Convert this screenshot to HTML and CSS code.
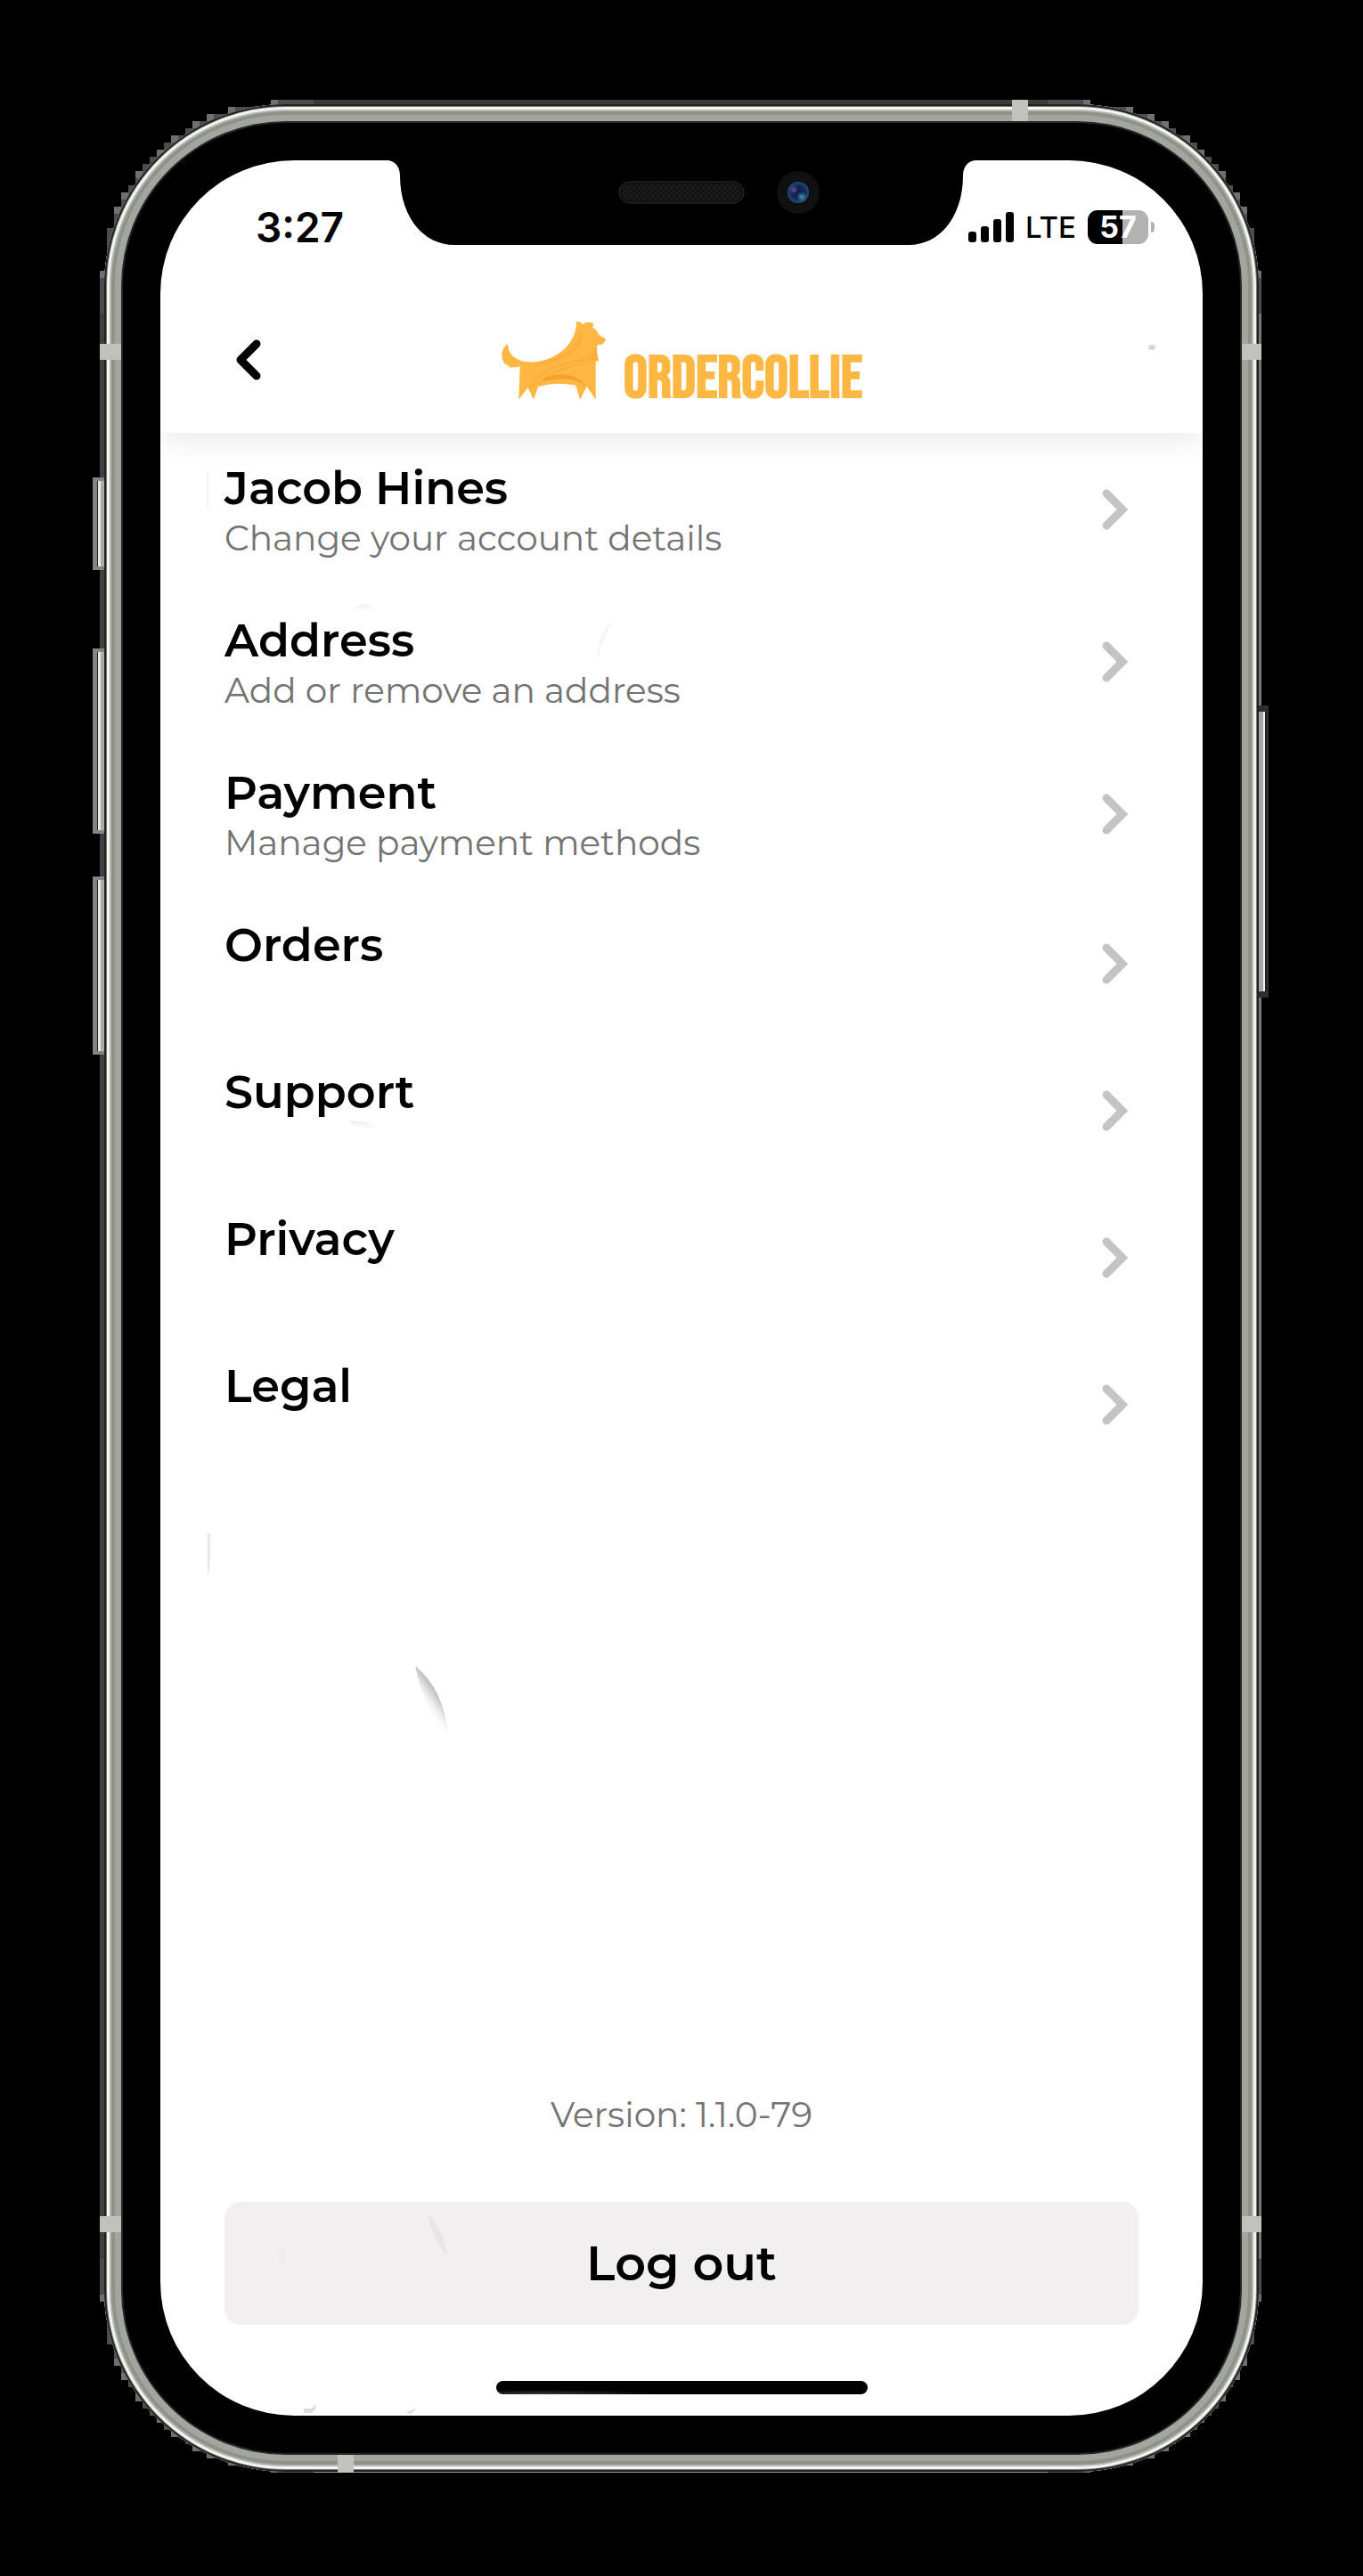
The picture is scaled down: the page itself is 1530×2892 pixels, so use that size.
FILE: index.html
```html
<!DOCTYPE html>
<html lang="en">
<head>
<meta charset="utf-8">
<meta name="viewport" content="width=device-width, initial-scale=1">
<title>OrderCollie – Account</title>
<link rel="stylesheet" href="styles.css">
</head>
<body>
<svg class="defs" aria-hidden="true">
  <symbol id="chevron" viewBox="0 0 30 48"><path d="M6 6 24 24 6 42" fill="none" stroke="currentColor" stroke-width="9" stroke-linecap="round" stroke-linejoin="miter"/></symbol>
  <symbol id="edge" viewBox="0 0 30 30"><path d="M24 0H30V30H0V24H1V18H2V15H3V13H4V12H5V10H6V9H7V8H8V7H9V6H10V5H12V4H13V3H15V2H18V1H24Z" fill="#4c4c4c"/><path d="M24 0h1v1h-1zM18 1h1v1h-1zM15 2h1v1h-1zM13 3h1v1h-1zM10 5h1v1h-1zM8 7h1v1H8zM5 10h1v1H5zM3 13h1v1H3zM2 15h1v1H2zM0 24h1v1H0z" fill="#707070"/></symbol>
</svg>
<div class="phone">
  <svg class="edge edge-tl" aria-hidden="true"><use href="#edge"/></svg>
  <svg class="edge edge-tr" aria-hidden="true"><use href="#edge"/></svg>
  <svg class="edge edge-bl" aria-hidden="true"><use href="#edge"/></svg>
  <svg class="edge edge-br" aria-hidden="true"><use href="#edge"/></svg>
  <i class="key key-mute"></i><i class="key key-up"></i><i class="key key-down"></i><i class="key key-power"></i>
  <div class="frame">
    <i class="band band-top"></i><i class="band band-bottom"></i>
    <i class="band band-side band-l1"></i><i class="band band-side band-l2"></i>
    <i class="band band-side band-r1"></i><i class="band band-side band-r2"></i>
    <main class="screen">
      <svg class="notch" viewBox="0 0 662 95" aria-hidden="true">
        <defs>
          <pattern id="mesh" width="6" height="6" patternUnits="userSpaceOnUse"><path d="M0 0h3v3H0zM3 3h3v3H3z" fill="#1c1c1c"/></pattern>
          <radialGradient id="lens"><stop offset="0" stop-color="#101a44"/><stop offset=".6" stop-color="#14264f"/><stop offset="1" stop-color="#1f4d7c"/></radialGradient>
          <radialGradient id="violet"><stop offset="0" stop-color="#6e4ba6"/><stop offset="1" stop-color="#6e4ba6" stop-opacity="0"/></radialGradient>
          <radialGradient id="cyan"><stop offset="0" stop-color="#4790b4"/><stop offset="1" stop-color="#4790b4" stop-opacity="0"/></radialGradient>
        </defs>
        <path d="M0 0C9 0 15 7 15 17C15 62 40 95 76 95H586C622 95 647 62 647 17C647 7 653 0 662 0Z"/>
        <rect x="261" y="24" width="140" height="24" rx="12" fill="#111" stroke="#2c2c2c"/>
        <rect x="264" y="27" width="134" height="18" rx="9" fill="url(#mesh)"/>
        <circle cx="462" cy="36" r="24" fill="#101010"/>
        <circle cx="462" cy="36" r="12" fill="url(#lens)"/>
        <circle cx="457" cy="33" r="5" fill="url(#violet)"/>
        <circle cx="466" cy="41" r="6" fill="url(#cyan)"/>
      </svg>
      <svg class="glints" viewBox="0 0 1170 2532" aria-hidden="true">
        <defs>
          <linearGradient id="glint" gradientUnits="userSpaceOnUse" x1="313" y1="1719" x2="293" y2="1733"><stop offset="0" stop-color="#b0b0b0"/><stop offset=".4" stop-color="#ddd"/><stop offset="1" stop-color="#fff" stop-opacity="0"/></linearGradient>
          <linearGradient id="glint-side"><stop offset="0" stop-color="#ddd"/><stop offset="1" stop-color="#fff" stop-opacity="0"/></linearGradient>
          <linearGradient id="glint-down" x2="0" y2="1"><stop offset="0" stop-color="#ebebeb"/><stop offset="1" stop-color="#fff" stop-opacity="0"/></linearGradient>
        </defs>
        <path d="M286 1690Q319 1718 323 1768Q296 1742 286 1690Z" fill="url(#glint)"/>
        <path d="M53 1541h7l-6 45h-1z" fill="url(#glint-side)"/>
        <path d="M52 350h5v42h-5z" fill="url(#glint-side)" opacity=".5"/>
        <path d="M212 508q8-10 16-10t16 10z" fill="url(#glint-down)"/>
        <path d="M212 1078l20 2 10 5-8 6-10-3z" fill="url(#glint-down)"/>
        <path d="M508 518q-18 12-17 44 3-22 17-44z" fill="#f5f5f5"/>
        <ellipse cx="1113" cy="210" rx="4" ry="3" fill="#d8d8d8"/>
        <path d="M300 2306q18 16 22 46-14-14-22-46z" fill="#e7e6e4"/>
        <path d="M132 2344h8v20h-6z" fill="#eeedea"/>
        <path d="M161 2524h8l6-5-1 6-4 4h-9z" fill="#ddd"/>
        <path d="M274 2527q11 2 14-8l-3 8-5 3z" fill="#ddd"/>
      </svg>

      <div class="status">
        <span class="time">3:27</span>
        <div class="status-right">
          <svg class="signal" viewBox="0 0 51 34" aria-label="Signal"><rect y="22" width="9" height="12" rx="3"/><rect x="14" y="16" width="9" height="18" rx="3"/><rect x="28" y="8" width="9" height="26" rx="3"/><rect x="42" width="9" height="34" rx="3"/></svg>
          <span class="network">LTE</span>
          <span class="battery"><span class="level">57</span><i class="nub"></i></span>
        </div>
      </div>

      <header class="topbar">
        <button class="back" type="button" aria-label="Back"><svg viewBox="0 0 30 48"><path d="M24 6 6 24 24 42" fill="none" stroke="currentColor" stroke-width="9" stroke-linecap="round" stroke-linejoin="round"/></svg></button>
        <div class="brand">
          <svg class="dog" viewBox="66 60 356 268" aria-hidden="true">
            <defs>
              <linearGradient id="fold" x1="0" y1="0" x2=".5" y2="1"><stop offset="0" stop-color="#f39a25"/><stop offset="1" stop-color="#ffb743"/></linearGradient>
            </defs>
            <path d="M89 139C90 170 111 198 165 200C235 201 322 150 321 62Q335 64 345 73Q347 66 358 66Q371 64 379 71Q380 78 374 82Q388 88 395 105Q405 115 420 121Q417 143 391 143L390 168L396 196L386 197V327L356 282L333 327L319 279Q255 265 192 283L176 327L157 286L126 327L130 214Q111 219 96 218Q91 211 80 207Q68 193 69 172Q72 148 89 139Z" fill="#ffb743"/>
            <path d="M131 260C160 205 230 195 270 179C315 158 334 125 334 97C350 142 300 177 255 195C200 207 160 220 131 260Z" fill="url(#fold)"/>
            <path d="M158 286C190 235 235 215 290 201C340 188 365 183 389 154L390 168L395 195C340 197 290 205 240 223C205 240 190 262 176 285L164 300Z" fill="url(#fold)" opacity=".55"/>
            <path d="M191 283Q226 217 386 198Q300 210 232 242Q210 254 191 283Z" fill="#f39a25" opacity=".8"/>
            <path d="M218 249Q310 224 355 283Q302 239 203 268Z" fill="#f39a25" opacity=".75"/>
          </svg>
          <span class="wordmark">ORDERCOLLIE</span>
        </div>
      </header>

      <nav class="menu" aria-label="Account">
        <a class="item item-double" href="#account"><span class="copy"><strong>Jacob Hines</strong><small>Change your account details</small></span><svg class="go"><use href="#chevron"/></svg></a>
        <a class="item item-double" href="#address"><span class="copy"><strong>Address</strong><small>Add or remove an address</small></span><svg class="go"><use href="#chevron"/></svg></a>
        <a class="item item-double" href="#payment"><span class="copy"><strong>Payment</strong><small>Manage payment methods</small></span><svg class="go"><use href="#chevron"/></svg></a>
        <a class="item" href="#orders"><span class="copy"><strong>Orders</strong></span><svg class="go"><use href="#chevron"/></svg></a>
        <a class="item" href="#support"><span class="copy"><strong>Support</strong></span><svg class="go"><use href="#chevron"/></svg></a>
        <a class="item" href="#privacy"><span class="copy"><strong>Privacy</strong></span><svg class="go"><use href="#chevron"/></svg></a>
        <a class="item" href="#legal"><span class="copy"><strong>Legal</strong></span><svg class="go"><use href="#chevron"/></svg></a>
      </nav>

      <footer class="foot">
        <p class="version">Version: 1.1.0-79</p>
        <button class="logout" type="button">Log out</button>
        <i class="home"></i>
      </footer>
    </main>
  </div>
</div>
</body>
</html>
```
FILE: styles.css
```css
* { box-sizing: border-box; }

body {
  margin: 0;
  padding: 117px;
  background: #000;
  color: #000;
  font-family: Montserrat, Inter, "Open Sans", sans-serif;
}

.defs { position: absolute; width: 0; height: 0; }

/* Device shell */
.phone { position: relative; }

.frame {
  position: relative;
  display: flex;
  min-height: calc(100vh - 234px);
  padding: 63px;
  border-radius: 204px;
  background: #000;
  box-shadow:
    inset 0 0 0 2px #222,
    inset 0 0 0 3px #777,
    inset 0 0 0 6px #f3f5f1,
    inset 0 0 0 8px #b5b7b0,
    inset 0 0 0 12px #8f928b,
    inset 0 0 0 19px #a3a69f,
    inset 0 0 0 21px #262826;
}

.phone::before {
  content: "";
  position: absolute;
  inset: 200px -3px 200px -5px;
  border-left: 5px solid #404040;
  border-right: 3px solid #777;
}

.phone::after {
  content: "";
  position: absolute;
  inset: -5px 200px -1px;
  border-top: 5px solid #3c3c3c;
  border-bottom: 1px solid #999;
  z-index: -1;
}

.edge { position: absolute; width: 240px; height: 240px; }
.edge-tl { top: -5px; left: -5px; }
.edge-tr { top: -5px; right: -3px; transform: scaleX(-1); }
.edge-bl { bottom: -1px; left: -5px; transform: scaleY(-1); }
.edge-br { bottom: -1px; right: -3px; transform: scale(-1); }

.key {
  position: absolute;
  left: -13px;
  width: 14px;
  border: solid #848484;
  border-width: 4px 0 4px 5px;
  background: linear-gradient(90deg, #222 0 1px, #e8e9e4 1px 4px, #aaaca6 4px 100%);
}
.key-mute { top: 419px; height: 104px; }
.key-up { top: 611px; height: 208px; }
.key-down { top: 867px; height: 200px; }
.key-power {
  left: auto;
  right: -11px;
  top: 675px;
  height: 328px;
  border-color: #2e2e2e;
  border-width: 7px 2px 7px 0;
  background: linear-gradient(90deg, #333 0 3px, #a5a5a5 3px 8px, #f0f0f0 8px 10px, #222 10px);
}

.band { position: absolute; background: #bfc2bd; }
.band-top { top: -5px; right: 259px; width: 18px; height: 24px; }
.band-bottom { bottom: -1px; left: 262px; width: 18px; height: 20px; }
.band-side { width: 24px; height: 18px; }
.band-l1 { top: 269px; left: -5px; }
.band-r1 { top: 269px; right: -3px; width: 22px; }
.band-l2 { bottom: 269px; left: -5px; }
.band-r2 { bottom: 269px; right: -3px; width: 22px; }

.screen {
  position: relative;
  flex: 1;
  min-width: 0;
  display: flex;
  flex-direction: column;
  overflow: hidden;
  border-radius: 150px;
  background: #fff;
}

.notch {
  position: absolute;
  top: 0;
  left: 50%;
  width: 662px;
  height: 95px;
  margin-left: -331px;
}

.glints {
  position: absolute;
  top: 0;
  left: 0;
  width: 100%;
  z-index: 1;
  pointer-events: none;
}

/* Status bar */
.status {
  display: flex;
  justify-content: space-between;
  align-items: center;
  padding: 44px 54px 36px 107px;
}
.time { font: 600 46px/62px Inter, sans-serif; }
.status-right { display: flex; align-items: center; gap: 13px; }
.signal { width: 51px; height: 34px; }
.network { font: 500 33px/40px Inter, sans-serif; }
.battery { display: flex; align-items: center; gap: 3px; }
.level {
  width: 68px;
  border-radius: 11px;
  background: linear-gradient(90deg, #000 0 39px, #b2b2b2 39px);
  color: #fff;
  font: 700 34px/38px Inter, sans-serif;
  text-align: center;
}
.nub { width: 4px; height: 12px; border-radius: 0 4px 4px 0; background: #b2b2b2; }

/* App bar */
.topbar {
  display: grid;
  grid-template-columns: 1fr auto 1fr;
  align-items: center;
  height: 164px;
  padding: 0 72px;
  box-shadow: 0 8px 34px rgba(0, 0, 0, .09);
  clip-path: inset(0 0 -60px);
}
.back {
  justify-self: start;
  display: flex;
  padding: 12px;
  border: 0;
  background: none;
  color: #000;
}
.back svg { width: 30px; height: 48px; }
.brand { display: flex; align-items: flex-end; gap: 19px; }
.dog { width: 119px; height: 89px; }
.wordmark {
  color: #ffb743;
  font: 700 67px/46px "Bebas Neue", "Barlow Condensed", "Roboto Condensed", sans-serif;
}

/* Menu */
.menu { display: flex; flex-direction: column; }
.item {
  display: flex;
  justify-content: space-between;
  align-items: center;
  height: 165px;
  padding: 0 84px 0 72px;
  color: #000;
  text-decoration: none;
}
.item-double { height: 171px; }
.copy {
  display: flex;
  flex-direction: column;
  align-self: flex-start;
  padding-top: 30px;
}
.copy strong { font-size: 51px; font-weight: 600; line-height: 64px; }
.copy small, .version {
  color: #737373;
  font-size: 39px;
  font-weight: 400;
  line-height: 48px;
}
.go { width: 30px; height: 48px; color: #c4c4c4; }

/* Footer */
.foot {
  display: flex;
  flex-direction: column;
  align-items: center;
  margin-top: auto;
  padding: 40px 72px 24px;
}
.version { margin: 0 0 74px; }
.logout {
  align-self: stretch;
  height: 138px;
  border: 0;
  border-radius: 18px;
  background: #f1eff0;
  color: #000;
  font: inherit;
  font-size: 54px;
  font-weight: 600;
}
.home {
  width: 417px;
  height: 15px;
  margin-top: 63px;
  border-radius: 8px;
  background: radial-gradient(ellipse at 12% 100%, #3a3a3a, #000 25%);
}
```
